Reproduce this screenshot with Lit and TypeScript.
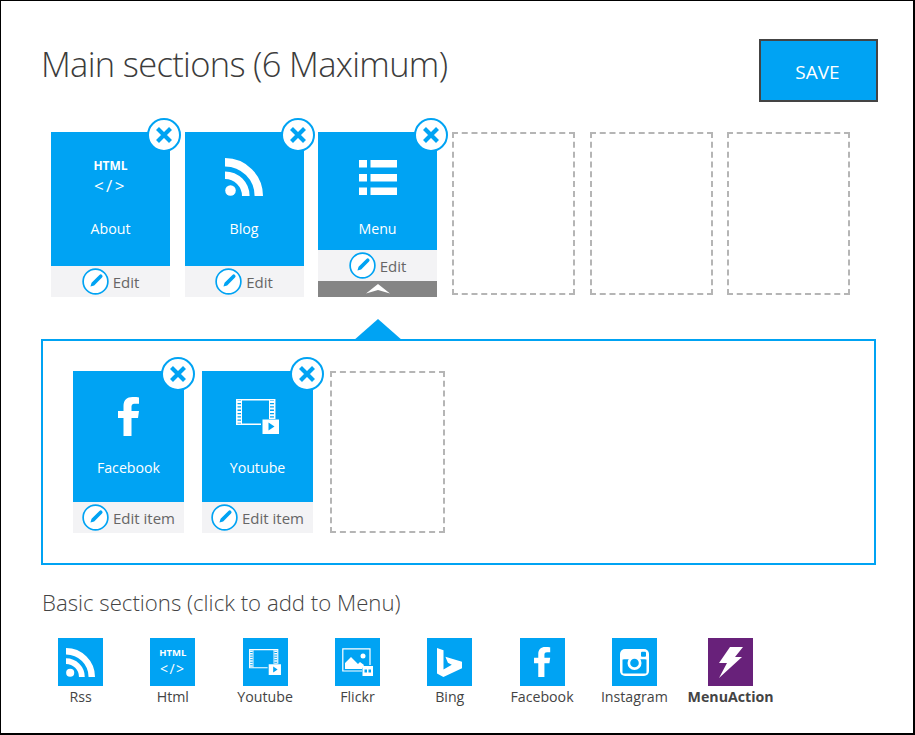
import { LitElement, html, css, svg } from "lit";
import { customElement } from "lit/decorators.js";

const rss = (s: number) => html`<svg width=${s} height=${s} viewBox="0 0 38 38"><circle cx="5.5" cy="32.5" r="5.3" fill="#fff"/><path d="M0 4.2A33.8 33.8 0 0 1 33.8 38" fill="none" stroke="#fff" stroke-width="8.4"/><path d="M0 17.2A20.8 20.8 0 0 1 20.8 38" fill="none" stroke="#fff" stroke-width="7.6"/></svg>`;
const menu = () => html`<svg width="39" height="36" viewBox="0 0 39 36" fill="#fff"><rect x="1" y="1" width="8" height="7.5"/><rect x="12.500" y="1" width="26.500" height="7.5"/><rect x="1" y="15" width="8" height="7.5"/><rect x="12.500" y="15" width="26.500" height="7.5"/><rect x="1" y="28.500" width="8" height="7.5"/><rect x="12.500" y="28.500" width="26.500" height="7.5"/></svg>`;
const fb = (w: number, h: number) => html`<svg width=${w} height=${h} viewBox="0 0 22 39"><path fill="#fff" d="M5.500 39V21H0v-7h5.500V9c0-6 3.500-9 9-9 2.500 0 5.500 .2 6.500 .4v6.400h-4c-3 0-3.500 1.400-3.500 3.700V14h7.500l-1 7h-6.500v18z"/></svg>`;
const video = (w: number, h: number) => html`<svg width=${w} height=${h} viewBox="0 0 43 35"><path fill="none" stroke="#fff" stroke-width="1.500" d="M25 25.200H.8V.8h37.900V20"/><path fill="none" stroke="#fff" stroke-width="4" stroke-dasharray="2 1.300" d="M3 2v22M36 2v18"/><path fill="none" stroke="#fff" stroke-width="1" d="M5.500 1v24M33.500 1v19"/><path fill="#fff" fill-rule="evenodd" d="M26.500 20.500H43V35H26.500zM32.500 23.500v8l6-4z"/></svg>`;
const flickr = () => html`<svg width="31" height="28" viewBox="0 0 31 28"><path fill="none" stroke="#fff" stroke-width="1.200" d="M20 23H.8V.8h27.200V17"/><circle cx="21" cy="8" r="2.500" fill="#fff"/><path fill="#fff" d="M3 21v-6l6-6 7 7 2-2 4 3-2 4z"/><path fill="#fff" fill-rule="evenodd" d="M20.500 18H31v10H20.500zM22.500 21.500v3h2.500v-3zM26.500 21.500v3h2.500v-3z"/></svg>`;
const bing = () => html`<svg width="25" height="29" viewBox="0 0 25 29"><path fill="#fff" d="M0 0l6.500 2.300v19.200l8.300-4.800-3.900-1.900-2.500-6.100L25 13.800v6.500L6.400 29 0 25.500z"/></svg>`;
const insta = () => html`<svg width="29" height="27" viewBox="0 0 29 27"><rect width="29" height="27" rx="5" fill="#fff"/><rect x="2.500" y="10" width="24" height="14.500" rx="1" fill="#00a3f3"/><rect x="2.500" y="2.500" width="24" height="8" fill="#fff"/><path fill="#00a3f3" d="M3.500 10.500h6a7 7 0 0 1 10 0h6v1H3.500z"/><circle cx="14.500" cy="14" r="7" fill="#fff"/><circle cx="14.500" cy="14" r="4.300" fill="#00a3f3"/><rect x="21" y="2.800" width="5" height="5" rx="1" fill="#00a3f3"/></svg>`;
const bolt = () => html`<svg width="24" height="31" viewBox="0 0 24 31"><path fill="#fff" d="M11 0h13l-8 10h7L0 31l8-15H0z"/></svg>`;
const pencil = svg`<path d="M7.500 16.500l1-3.300 7-7a1.600 1.600 0 0 1 2.300 2.300l-7 7z" fill="#00a3f3"/>`;

type Item = { name: string; icon: unknown };

@customElement("app-card")
class AppCard extends LitElement {
  static properties = { label: {}, edit: {}, expanded: { type: Boolean }, small: { type: Boolean } };
  label = "";
  edit = "Edit";
  expanded = false;
  small = false;
  static styles = css`
    :host { display: block; position: relative; width: 119px; height: 165px; flex: none; }
    :host([small]) { width: 111px; height: 162px; }
    .wrap { display: flex; flex-direction: column; height: 100%; }
    .blue { flex: 1; background: #00a3f3; color: #fff; display: flex; flex-direction: column; align-items: center; padding-top: 26px; box-sizing: border-box; min-height: 0; }
    .ic { height: 38px; display: flex; align-items: center; justify-content: center; }
    .lbl { margin-top: 23px; line-height: 20px; font-size: 14.200px; }
    .edit { height: 31px; flex: none; background: #f3f3f5; color: #666; display: flex; align-items: center; justify-content: center; gap: 4px; font-size: 15px; }
    .edit svg { display: block; }
    .toggle { height: 16px; flex: none; background: #858585; display: flex; justify-content: center; align-items: center; }
    .x { position: absolute; top: -14px; right: -11px; display: block; }
  `;
  render() {
    return html`<div class="wrap">
      <div class="blue"><div class="ic"><slot></slot></div><div class="lbl">${this.label}</div></div>
      <div class="edit"><svg width="27" height="27" viewBox="0 0 24 24"><circle cx="12" cy="12" r="11" fill="#fff" stroke="#00a3f3" stroke-width="1.500"/>${pencil}</svg><span>${this.edit}</span></div>
      ${this.expanded ? html`<div class="toggle"><svg width="24" height="10" viewBox="0 0 24 10"><path fill="#fff" d="M12 0l12 9.500-12-3.500-12 3.500z"/></svg></div>` : ""}
    </div>
    <svg class="x" width="34" height="34" viewBox="0 0 34 34"><circle cx="17" cy="17" r="16" fill="#fff" stroke="#00a3f3" stroke-width="2"/><path d="M10.500 10.500l13 13M23.500 10.500l-13 13" stroke="#00a3f3" stroke-width="4.200"/></svg>`;
  }
}

@customElement("app-root")
export class AppRoot extends LitElement {
  static styles = css`
    :host { display: block; width: 915px; height: 735px; box-sizing: border-box; border: 1px solid #000; border-width: 1px 2px 2px 1px; background: #fff; font-family: "Open Sans", sans-serif; color: #444; overflow: hidden; }
    .head { display: flex; justify-content: space-between; align-items: flex-start; padding: 38px 35px 0 40px; height: 131px; box-sizing: border-box; }
    h1 { margin: 0; font-weight: 300; font-size: 34.500px; letter-spacing: -0.680px; line-height: 50px; color: #3c3c3c; }
    .save { width: 119px; height: 63px; box-sizing: border-box; border: 2px solid #444; background: #00a3f3; color: #fff; font: 19px "Open Sans", sans-serif; padding: 2px 2px 0 0; }
    .row { display: flex; padding-left: 50px; gap: 14.500px; height: 165px; }
    .slot { flex: none; box-sizing: border-box; width: 123px; height: 163px; border: 2px dashed #b5b5b5; }
    .slots { display: flex; gap: 14.500px; margin-left: 0.500px; }
    .tri { width: 0; height: 0; border: 25px solid transparent; border-top: 0; border-bottom: 22px solid #00a3f3; margin: 22px 0 -2px 352px; }
    .panel { margin-left: 40px; width: 835px; height: 226px; box-sizing: border-box; border: 2px solid #00a3f3; padding: 30px 0 0 30px; display: flex; gap: 18px; }
    .panel .slot { width: 115px; height: 162px; margin-left: -1px; }
    h2 { margin: 23px 0 0 41px; font-weight: 300; font-size: 22.200px; line-height: 30px; color: #444; }
    .tiles { display: flex; padding-left: 33.400px; margin-top: 20px; }
    .tile { width: 92.300px; flex: none; display: flex; flex-direction: column; align-items: center; font-size: 14.200px; color: #444; }
    .tile:last-child { margin-left: 4px; font-weight: 700; }
    .sq { width: 45px; height: 48px; background: #00a3f3; display: flex; align-items: center; justify-content: center; }
    .tile:last-child .sq { background: #68217a; }
    .tile span { margin-top: 1px; line-height: 20px; white-space: nowrap; }
    .htm { display: flex; flex-direction: column; align-items: center; color: #fff; }
    .htm b { font-size: 12px; line-height: 17px; font-weight: 700; }
    .htm i { font-style: normal; font-size: 17px; line-height: 23px; letter-spacing: 2.500px; font-weight: 400; }
    .htm.sm b { font-size: 9.500px; line-height: 13px; }
    .htm.sm i { font-size: 14px; line-height: 20px; letter-spacing: 1.500px; }
  `;
  render() {
    const htmlIcon = (sm: boolean) => html`<div class="htm ${sm ? "sm" : ""}"><b>HTML</b><i>&lt;/&gt;</i></div>`;
    const tiles: Item[] = [
      { name: "Rss", icon: rss(29) },
      { name: "Html", icon: htmlIcon(true) },
      { name: "Youtube", icon: video(32, 26) },
      { name: "Flickr", icon: flickr() },
      { name: "Bing", icon: bing() },
      { name: "Facebook", icon: fb(17, 30) },
      { name: "Instagram", icon: insta() },
      { name: "MenuAction", icon: bolt() },
    ];
    return html`
      <div class="head"><h1>Main sections (6 Maximum)</h1><button class="save">SAVE</button></div>
      <div class="row">
        <app-card label="About">${htmlIcon(false)}</app-card>
        <app-card label="Blog">${rss(38)}</app-card>
        <app-card label="Menu" expanded>${menu()}</app-card>
        <div class="slots"><div class="slot"></div><div class="slot"></div><div class="slot"></div></div>
      </div>
      <div class="tri"></div>
      <div class="panel">
        <app-card small label="Facebook" edit="Edit item">${fb(22, 39)}</app-card>
        <app-card small label="Youtube" edit="Edit item">${video(43, 35)}</app-card>
        <div class="slot"></div>
      </div>
      <h2>Basic sections (click to add to Menu)</h2>
      <div class="tiles">${tiles.map((t) => html`<div class="tile"><div class="sq">${t.icon}</div><span>${t.name}</span></div>`)}</div>
    `;
  }
}
